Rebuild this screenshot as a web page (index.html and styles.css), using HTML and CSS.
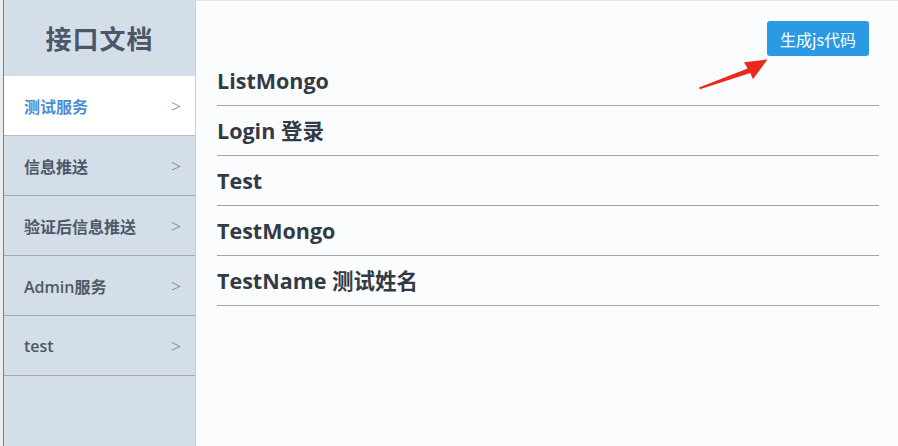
FILE: index.html
```html
<!DOCTYPE html>
<html lang="zh-CN">
<head>
    <meta charset="UTF-8">
    <title>接口文档</title>
    <link rel="stylesheet" href="styles.css">
</head>
<body>
    <div class="frame">
        <aside class="sidebar">
            <div class="brand">接口文档</div>
            <ul class="menu">
                <li class="active"><span>测试服务</span><i>&gt;</i></li>
                <li><span>信息推送</span><i>&gt;</i></li>
                <li><span>验证后信息推送</span><i>&gt;</i></li>
                <li><span>Admin服务</span><i>&gt;</i></li>
                <li><span>test</span><i>&gt;</i></li>
            </ul>
        </aside>

        <main class="main">
            <div class="toolbar">
                <button class="gen-btn">生成js代码</button>
                <svg class="arrow" viewBox="0 0 80 40">
                    <path d="M0 36 L54 15 L50 8 L76 5 L60 27 L57 20 L1 38 Z" fill="#e8291c"/>
                </svg>
            </div>
            <ul class="api-list">
                <li>ListMongo</li>
                <li>Login 登录</li>
                <li>Test</li>
                <li>TestMongo</li>
                <li>TestName 测试姓名</li>
            </ul>
        </main>
    </div>
</body>
</html>
```

FILE: styles.css
```css
* {
    margin: 0;
    padding: 0;
    box-sizing: border-box;
}

html, body {
    height: 100%;
}

body {
    font-family: "Open Sans", "Noto Sans CJK SC", sans-serif;
    background: #e9ebee;
    color: #333a45;
}

.frame {
    display: flex;
    height: 100%;
    padding-left: 3px;
}

.sidebar {
    width: 193px;
    flex-shrink: 0;
    background: #d4dee8;
    border-left: 1px solid #7b7f86;
    border-right: 1px solid #c9d1da;
}

.brand {
    height: 76px;
    display: flex;
    align-items: center;
    justify-content: center;
    font-size: 26px;
    font-weight: 700;
    color: #4c5668;
    letter-spacing: 1px;
}

.menu {
    list-style: none;
}

.menu li {
    height: 60px;
    display: flex;
    align-items: center;
    justify-content: space-between;
    padding: 0 14px 0 20px;
    border-bottom: 1px solid #a3a8b0;
    font-size: 16px;
    font-weight: 600;
    color: #4e5868;
}

.menu li i {
    font-style: normal;
    font-weight: 300;
    font-size: 18px;
    color: #737a86;
}

.menu li.active {
    background: #ffffff;
    color: #4a8ed2;
    border-bottom-color: #b8bdc4;
}

.main {
    flex: 1;
    background: #fbfcfd;
    border-top: 1px solid #e2e4e8;
    padding: 0 19px 0 21px;
}

.toolbar {
    position: relative;
    height: 55px;
    display: flex;
    justify-content: flex-end;
    align-items: flex-start;
    padding-top: 20px;
    padding-right: 10px;
}

.gen-btn {
    width: 102px;
    height: 35px;
    border: none;
    border-radius: 3px;
    background: #2a9ae5;
    color: #ffffff;
    font-family: "Noto Sans CJK SC", sans-serif;
    font-size: 16px;
}

.arrow {
    position: absolute;
    right: 108px;
    top: 54px;
    width: 72px;
    height: 36px;
}

.api-list {
    list-style: none;
}

.api-list li {
    height: 50px;
    line-height: 50px;
    border-bottom: 1px solid #a0a4ab;
    font-size: 21.5px;
    font-weight: 700;
    color: #333a45;
}
```
